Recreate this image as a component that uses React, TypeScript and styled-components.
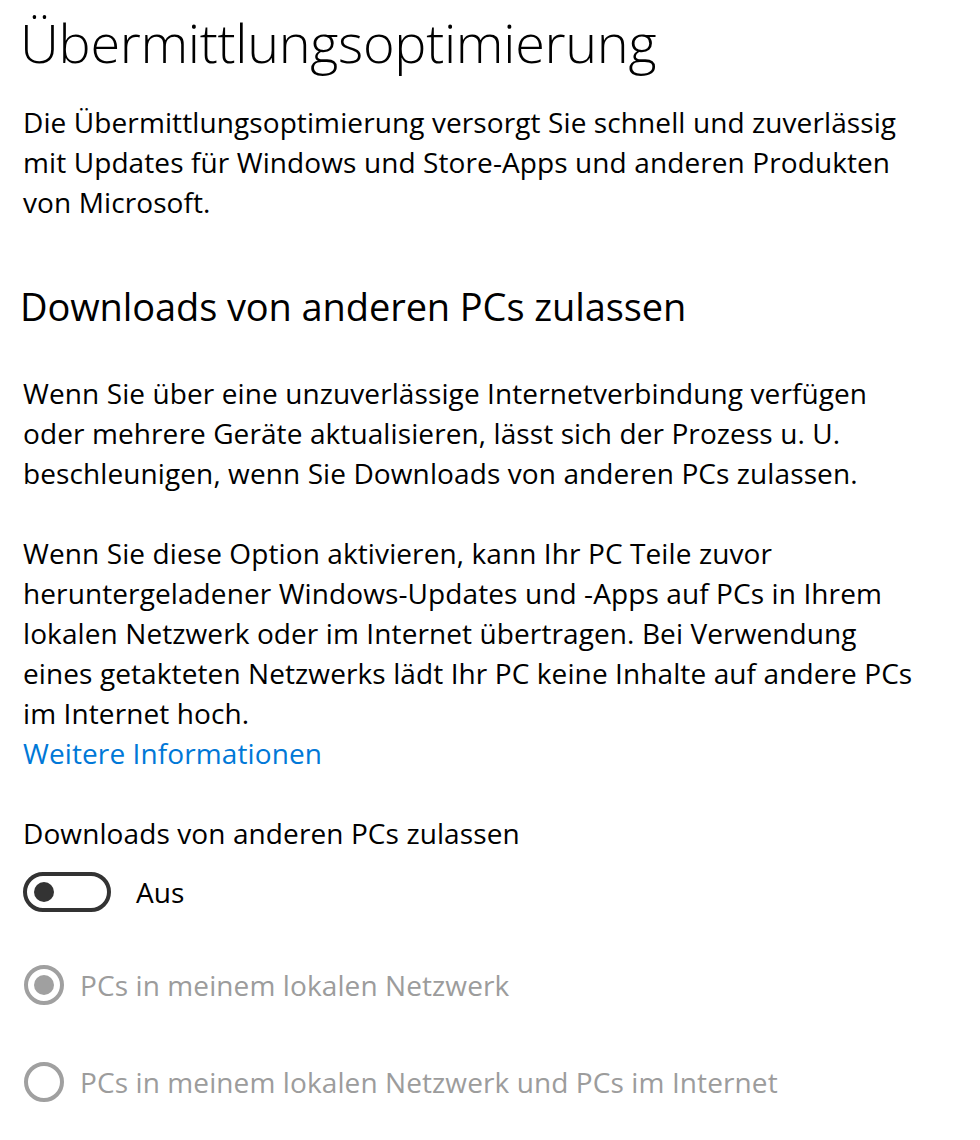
import React from "react";
import styled, { createGlobalStyle } from "styled-components";

const GlobalStyle = createGlobalStyle`
  html, body {
    margin: 0;
    padding: 0;
    background: #ffffff;
  }
  body {
    font-family: "Segoe UI", "Open Sans", "Noto Sans", sans-serif;
    color: #000000;
  }
`;

const Page = styled.div`
  display: flex;
  flex-direction: column;
  width: 980px;
  min-height: 1140px;
  padding: 0 0 0 23px;
  box-sizing: border-box;
`;

const Title = styled.h1`
  margin: 2px 0 0 -3px;
  font-family: "Open Sans", sans-serif;
  font-weight: 300;
  font-size: 54px;
  line-height: 80px;
  letter-spacing: -0.3px;
  color: #000;
`;

const Paragraph = styled.p`
  margin: ${({ $top }: { $top: number }) => $top}px 0 0 0;
  font-size: 28px;
  line-height: 40px;
  letter-spacing: 0.1px;
  white-space: nowrap;
`;

const Subtitle = styled.h2`
  margin: 54px 0 0 -3px;
  font-family: "Open Sans", sans-serif;
  font-weight: 400;
  font-size: 38px;
  line-height: 60px;
  letter-spacing: -0.1px;
`;

const Link = styled.a`
  display: block;
  font-size: 28px;
  line-height: 40px;
  letter-spacing: 0.1px;
  color: #0078d7;
  text-decoration: none;
`;

const Label = styled.div`
  margin-top: 40px;
  font-size: 28px;
  line-height: 40px;
  letter-spacing: 0.1px;
`;

const ToggleRow = styled.div`
  display: flex;
  align-items: center;
  gap: 25px;
  margin-top: 19px;
  height: 40px;
`;

const Track = styled.div`
  display: flex;
  align-items: center;
  width: 88px;
  height: 40px;
  box-sizing: border-box;
  border: 4px solid #333333;
  border-radius: 20px;
  padding-left: 7px;
`;

const Knob = styled.div`
  width: 20px;
  height: 20px;
  border-radius: 50%;
  background: #333333;
`;

const ToggleText = styled.span`
  font-size: 28px;
  line-height: 40px;
  letter-spacing: 0.1px;
`;

const RadioRow = styled.div`
  display: flex;
  align-items: center;
  gap: 16px;
  margin-top: ${({ $top }: { $top: number }) => $top}px;
  height: 40px;
  color: #999999;
`;

const RadioCircle = styled.div<{ $checked?: boolean }>`
  display: flex;
  align-items: center;
  justify-content: center;
  width: 40px;
  height: 40px;
  box-sizing: border-box;
  border: 4px solid #a0a0a0;
  border-radius: 50%;
  margin-left: 1px;

  &::after {
    content: "";
    display: ${({ $checked }) => ($checked ? "block" : "none")};
    width: 20px;
    height: 20px;
    border-radius: 50%;
    background: #a0a0a0;
  }
`;

const RadioText = styled.span`
  font-size: 28px;
  line-height: 40px;
  letter-spacing: 0.1px;
  color: #9c9c9c;
`;

export default function App() {
  return (
    <>
      <GlobalStyle />
      <Page>
        <Title>Übermittlungsoptimierung</Title>
        <Paragraph $top={20}>
          Die Übermittlungsoptimierung versorgt Sie schnell und zuverlässig
          <br />
          mit Updates für Windows und Store-Apps und anderen Produkten
          <br />
          von Microsoft.
        </Paragraph>
        <Subtitle>Downloads von anderen PCs zulassen</Subtitle>
        <Paragraph $top={37}>
          Wenn Sie über eine unzuverlässige Internetverbindung verfügen
          <br />
          oder mehrere Geräte aktualisieren, lässt sich der Prozess u. U.
          <br />
          beschleunigen, wenn Sie Downloads von anderen PCs zulassen.
        </Paragraph>
        <Paragraph $top={40}>
          Wenn Sie diese Option aktivieren, kann Ihr PC Teile zuvor
          <br />
          heruntergeladener Windows-Updates und -Apps auf PCs in Ihrem
          <br />
          lokalen Netzwerk oder im Internet übertragen. Bei Verwendung
          <br />
          eines getakteten Netzwerks lädt Ihr PC keine Inhalte auf andere PCs
          <br />
          im Internet hoch.
        </Paragraph>
        <Link href="#">Weitere Informationen</Link>
        <Label>Downloads von anderen PCs zulassen</Label>
        <ToggleRow>
          <Track>
            <Knob />
          </Track>
          <ToggleText>Aus</ToggleText>
        </ToggleRow>
        <RadioRow $top={53}>
          <RadioCircle $checked />
          <RadioText>PCs in meinem lokalen Netzwerk</RadioText>
        </RadioRow>
        <RadioRow $top={57}>
          <RadioCircle />
          <RadioText>PCs in meinem lokalen Netzwerk und PCs im Internet</RadioText>
        </RadioRow>
      </Page>
    </>
  );
}
